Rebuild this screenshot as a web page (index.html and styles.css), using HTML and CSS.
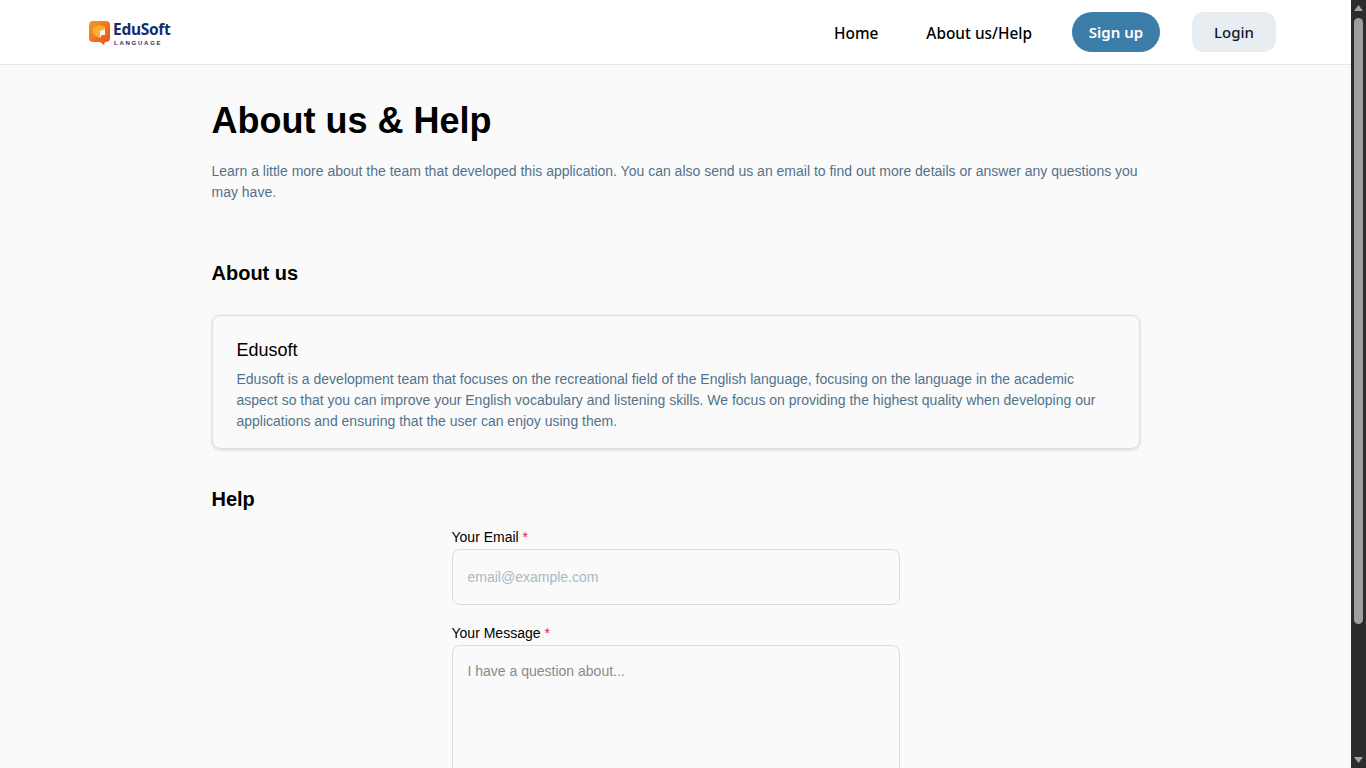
FILE: index.html

```html
<!DOCTYPE html>
<html lang="en">
<head>
    <meta charset="UTF-8">
    <meta name="viewport" content="width=device-width, initial-scale=1.0">
    <title>About us & Help</title>
    <link rel="stylesheet" href="styles.css">
</head>
<body>

<header class="navbar">
    <a class="logo" href="#">
        <svg class="logo-icon" width="21" height="24" viewBox="0 0 21 24">
            <defs>
                <linearGradient id="logoBg" x1="0" y1="0" x2="1" y2="1">
                    <stop offset="0" stop-color="#f59a23"/>
                    <stop offset="1" stop-color="#e8501c"/>
                </linearGradient>
            </defs>
            <path d="M4 0H17A4 4 0 0 1 21 4V17A4 4 0 0 1 17 21H16L15 24L11 21H4A4 4 0 0 1 0 17V4A4 4 0 0 1 4 0Z" fill="url(#logoBg)"/>
            <path d="M4 7L10 4L16 6L16 8L11 10L11 17L6 15L4 12Z" fill="#f9b233"/>
            <path d="M11 10L16 8L16 14L13 14L11 17Z" fill="#fdf3e3"/>
        </svg>
        <span class="logo-text">
            <span class="logo-name">EduSoft</span>
            <span class="logo-sub">LANGUAGE</span>
        </span>
    </a>
    <nav class="nav-links">
        <a class="nav-link" href="#">Home</a>
        <a class="nav-link" href="#">About us/Help</a>
        <a class="btn btn-signup" href="#">Sign up</a>
        <a class="btn btn-login" href="#">Login</a>
    </nav>
</header>

<main class="container">
    <h1>About us &amp; Help</h1>
    <p class="intro">Learn a little more about the team that developed this application. You can also send us an email to find out more details or answer any questions you may have.</p>

    <h2 class="about-title">About us</h2>
    <div class="card">
        <h3>Edusoft</h3>
        <p>Edusoft is a development team that focuses on the recreational field of the English language, focusing on the language in the academic aspect so that you can improve your English vocabulary and listening skills. We focus on providing the highest quality when developing our applications and ensuring that the user can enjoy using them.</p>
    </div>

    <h2 class="help-title">Help</h2>
    <form class="help-form">
        <label for="email">Your Email <span class="req">*</span></label>
        <input id="email" type="email" placeholder="email@example.com">

        <label class="label-message" for="message">Your Message <span class="req">*</span></label>
        <textarea id="message" placeholder="I have a question about..."></textarea>
    </form>
</main>

<!-- headless browser hides the real scrollbar, so it is drawn here -->
<div class="scrollbar">
    <svg class="arrow" width="15" height="17" viewBox="0 0 15 17"><path d="M7.500 5L12 11H3Z" fill="#a3a3a3"/></svg>
    <div class="scroll-track"><div class="scroll-thumb"></div></div>
    <svg class="arrow" width="15" height="17" viewBox="0 0 15 17"><path d="M7.500 12L3 6H12Z" fill="#a3a3a3"/></svg>
</div>

</body>
</html>
```

FILE: styles.css

```css
body {
    margin: 0;
    padding-right: 15px;
    font-family: "Liberation Sans", Arial, sans-serif;
    background-color: #fafafa;
    color: #000;
}
.scrollbar {
    position: fixed;
    top: 0;
    right: 0;
    bottom: 0;
    display: flex;
    flex-direction: column;
    width: 15px;
    background: #2c2c2c;
}
.arrow {
    display: block;
    flex: none;
}
.scroll-track {
    flex: 1;
    padding: 1px 3px 0;
}
.scroll-thumb {
    height: 606px;
    border-radius: 5px;
    background: #9f9f9f;
}
.navbar {
    display: flex;
    justify-content: space-between;
    align-items: center;
    height: 64px;
    padding: 0 75px 0 89px;
    background: #fff;
    border-bottom: 1px solid #e5e7eb;
}
.logo {
    display: flex;
    align-items: center;
    gap: 3px;
    padding-top: 2px;
    text-decoration: none;
}
.logo-text {
    display: flex;
    flex-direction: column;
    gap: 3px;
    padding-top: 1px;
}
.logo-name {
    font-family: "Noto Sans", sans-serif;
    font-size: 15.500px;
    font-weight: 700;
    line-height: 15px;
    letter-spacing: -0.3px;
    color: #14306b;
}
.logo-sub {
    margin-left: 1px;
    font-family: "Liberation Sans", sans-serif;
    font-size: 6px;
    font-weight: 700;
    line-height: 6px;
    letter-spacing: 1.750px;
    color: #14306b;
}
.nav-links {
    display: flex;
    align-items: center;
}
.nav-link {
    margin-right: 48px;
    padding-top: 2px;
    font-family: "Noto Sans", sans-serif;
    font-size: 15.400px;
    font-weight: 500;
    color: #000;
    text-decoration: none;
}
.nav-link + .btn {
    margin-left: -8px;
}
.btn {
    display: flex;
    align-items: center;
    justify-content: center;
    height: 40px;
    font-family: "Noto Sans", sans-serif;
    font-size: 15px;
    font-weight: 500;
    text-decoration: none;
}
.btn-signup {
    width: 88px;
    margin-right: 32px;
    border-radius: 20px;
    background: #3b7ca8;
    color: #fff;
    font-weight: 600;
}
.btn-login {
    width: 84px;
    border-radius: 12px;
    background: #e8edf2;
    color: #0f172a;
}
.container {
    width: 928px;
    margin: 0 auto;
}
h1 {
    margin: 34px 0 0;
    font-size: 36px;
    line-height: 44px;
    font-weight: 700;
}
.intro {
    margin: 18px 0 0;
    font-size: 14px;
    line-height: 21px;
    color: #52728a;
}
h2 {
    margin: 0;
    font-size: 20px;
    line-height: 28px;
    font-weight: 700;
}
.about-title {
    margin-top: 56px;
}
.card {
    margin-top: 28px;
    padding: 22px 24px 16px;
    border: 1px solid #d6dfe6;
    border-radius: 8px;
    box-shadow: 0 1px 3px rgba(0, 0, 0, 0.15);
}
.card h3 {
    margin: 0;
    font-size: 18px;
    line-height: 24px;
    font-weight: 400;
}
.card p {
    margin: 7px 0 0;
    font-size: 14px;
    line-height: 21px;
    color: #52728a;
}
.help-title {
    margin-top: 36px;
}
.help-form {
    display: flex;
    flex-direction: column;
    width: 448px;
    margin: 14px auto 60px;
}
label {
    font-size: 14px;
    line-height: 20px;
}
.req {
    color: #e11d48;
}
input, textarea {
    box-sizing: border-box;
    width: 100%;
    margin-top: 2px;
    padding: 16px 15px;
    border: 1px solid #d3dde6;
    border-radius: 8px;
    background: transparent;
    color: #000;
    font-family: "Liberation Sans", Arial, sans-serif;
    font-size: 14px;
    line-height: 21px;
    outline: none;
}
input {
    height: 56px;
}
input::placeholder {
    color: #a9b8c6;
}
textarea {
    height: 224px;
    padding-top: 15px;
    resize: none;
}
textarea::placeholder {
    color: #8a8a8a;
}
.label-message {
    margin-top: 18px;
}
```
